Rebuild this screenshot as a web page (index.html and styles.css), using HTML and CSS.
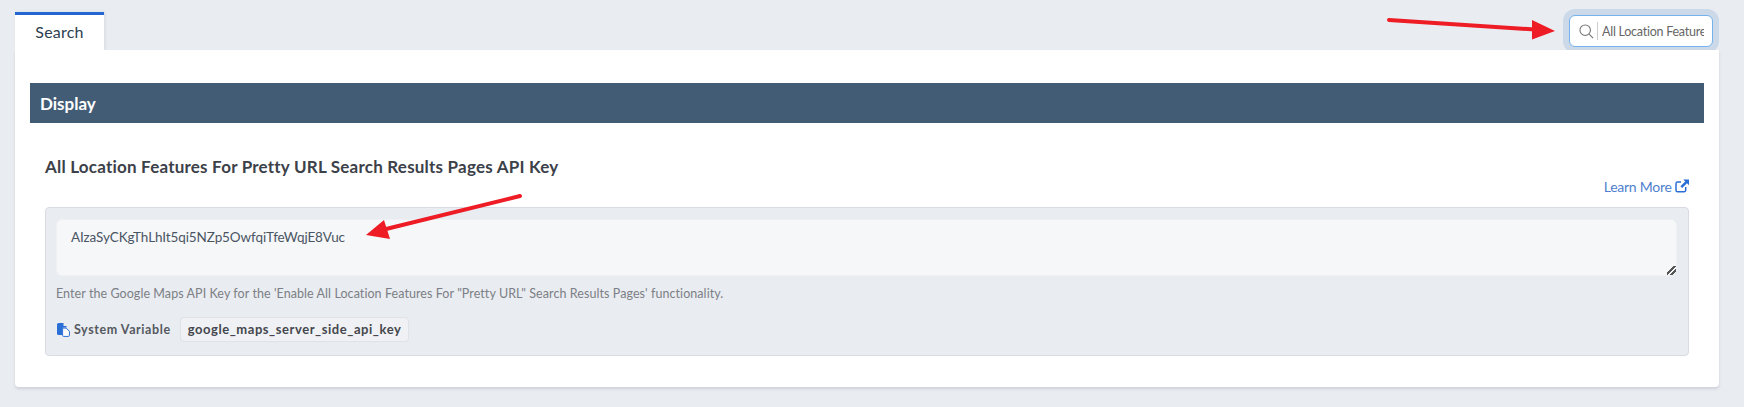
FILE: index.html
```html
<!DOCTYPE html>
<html lang="en">
<head>
<meta charset="utf-8">
<title>Search settings</title>
<link rel="stylesheet" href="styles.css">
</head>
<body>
<div class="page">
  <header class="top">
    <div class="tab">Search</div>
    <label class="search">
      <svg class="search-icon" viewBox="0 0 16 16" width="15" height="15"><circle cx="6.6" cy="6.6" r="5.6"/><path d="M10.8 10.8L15 15"/></svg>
      <input class="search-input" type="text" value="All Location Features">
    </label>
  </header>
  <main class="card">
    <h2 class="banner">Display</h2>
    <section class="setting">
      <h3 class="setting-title">All Location Features For Pretty URL Search Results Pages API Key</h3>
      <div class="learn-row">
        <a class="learn" href="#">Learn More
          <svg viewBox="0 0 14 14" width="14" height="14"><path class="ext-box" d="M10.7 8v3.2a1.6 1.6 0 0 1-1.6 1.6H2.6A1.6 1.6 0 0 1 1 11.200V4.700a1.600 1.600 0 0 1 1.600-1.600H6"/><path class="ext-arrow" d="M8.200.500H14v5.800l-2-2-4.800 4.800-1.800-1.800L10.200 2.500z"/></svg>
        </a>
      </div>
      <div class="well">
        <textarea class="key" spellcheck="false">AIzaSyCKgThLhIt5qi5NZp5OwfqiTfeWqjE8Vuc</textarea>
        <p class="help">Enter the Google Maps API Key for the 'Enable All Location Features For "Pretty URL" Search Results Pages' functionality.</p>
        <div class="sysvar">
          <svg viewBox="0 0 13 14" width="13" height="14"><path class="doc-back" d="M0 1.500A1.500 1.500 0 0 1 1.500 0H6.500v3h3v1.500H6.500A1.500 1.500 0 0 0 5 6v6H1.500A1.500 1.500 0 0 1 0 10.500z"/><path class="doc-front" d="M5.600 5.100H9.200L12.400 8.300V12.400A1 1 0 0 1 11.400 13.400H6.600A1 1 0 0 1 5.600 12.400z"/></svg>
          <span class="sysvar-label">System Variable</span>
          <code class="sysvar-code">google_maps_server_side_api_key</code>
        </div>
      </div>
    </section>
  </main>
</div>
<svg class="arrows" viewBox="0 0 1744 407" width="1744" height="407" aria-hidden="true">
  <path class="arrow-line" d="M1389 20L1535 29.500"/>
  <path class="arrow-head" d="M1532 20L1555 31L1532 39.500z"/>
  <path class="arrow-line" d="M520 196L382 230"/>
  <path class="arrow-head" d="M384 220L366 235L390 239z"/>
</svg>
</body>
</html>
```
FILE: styles.css
```css
* { box-sizing: border-box; }
html, body { margin: 0; height: 100%; }
body {
  background: #e9ecf1;
  color: #3c4149;
  font-family: "Lato", "Open Sans", sans-serif;
  overflow: hidden;
  position: relative;
}
.page { padding: 12px 25px 0 15px; }
.top {
  display: flex;
  justify-content: space-between;
  align-items: flex-end;
  height: 38px;
}
.tab {
  width: 89px;
  height: 38px;
  background: #fff;
  border-top: 3px solid #2366d1;
  color: #2c3e50;
  font-size: 16px;
  line-height: 34px;
  text-align: center;
  letter-spacing: 0.2px;
  box-shadow: 1px 0 3px rgba(60, 70, 90, .1);
}
.search {
  display: flex;
  align-items: center;
  width: 144px;
  height: 32px;
  margin: 0 6px 3px 0;
  padding-left: 9px;
  background: #fff;
  border: 1px solid #74b3ee;
  border-radius: 6px;
  box-shadow: 0 0 0 6px rgba(100, 150, 200, .22);
}
.search-icon { flex: none; fill: none; stroke: #777; stroke-width: 1.2; }
.search-input {
  flex: 1;
  min-width: 0;
  height: 18px;
  margin: 0 8px 0 3px;
  padding: 0 0 0 4px;
  border: 0;
  border-left: 1px solid #ccc;
  outline: 0;
  background: transparent;
  color: #666;
  font: 12.500px "Lato", sans-serif;
  letter-spacing: -.25px;
}
.card {
  position: relative;
  height: 337px;
  padding: 33px 15px 0;
  background: #fff;
  border-radius: 0 0 4px 4px;
  box-shadow: 0 2px 3px rgba(60, 70, 90, .16);
}
.banner {
  margin: 0;
  height: 40px;
  padding-left: 10px;
  background: #435c76;
  color: #fff;
  font-size: 17px;
  font-weight: 700;
  line-height: 41px;
  letter-spacing: 0;
}
.setting { padding: 0 15px; }
.setting-title {
  margin: 0;
  padding-top: 32px;
  color: #3c4149;
  font-size: 17px;
  font-weight: 700;
  line-height: 23px;
  letter-spacing: .21px;
}
.learn-row {
  display: flex;
  justify-content: flex-end;
  height: 29px;
}
.learn {
  color: #4f7fd0;
  font-size: 14px;
  line-height: 18px;
  letter-spacing: -.25px;
  text-decoration: none;
}
.learn svg { vertical-align: -1px; }
.ext-box { fill: none; stroke: #2a6fd6; stroke-width: 1.500; }
.ext-arrow { fill: #2a6fd6; }
.well {
  height: 149px;
  padding: 11px 11px 0 10px;
  background: #e9ecf1;
  border: 1px solid #d8dce2;
  border-radius: 4px;
}
.key {
  display: block;
  width: 100%;
  height: 57px;
  padding: 7px 14px;
  background: #f6f7f9;
  border: 1px solid #eef0f3;
  border-radius: 6px;
  outline: 0;
  color: #4a5563;
  font: 13.500px/20px "Lato", sans-serif;
  letter-spacing: -.1px;
}
.key::-webkit-resizer {
  background: linear-gradient(135deg, transparent 36%, #555 36%, #555 52%, transparent 52%, transparent 66%, #555 66%, #555 82%, transparent 82%) right bottom / 9px 9px no-repeat;
}
.help {
  margin: 9px 0 0;
  color: #7c7f85;
  font-size: 12.500px;
  line-height: 18px;
  letter-spacing: .07px;
}
.sysvar {
  display: flex;
  align-items: center;
  margin: 14px 0 0 1px;
}
.sysvar svg { flex: none; }
.doc-back { fill: #2a6fd6; }
.doc-front { fill: #fff; stroke: #2a6fd6; stroke-width: 1; }
.sysvar-label {
  margin-left: 4px;
  color: #55595f;
  font-size: 12.500px;
  font-weight: 700;
  letter-spacing: .58px;
}
.sysvar-code {
  margin-left: 9px;
  padding: 0 7px;
  height: 25px;
  background: #f0f1f4;
  border: 1px solid #dfe2e6;
  border-radius: 4px;
  color: #44474d;
  font: 700 13px/22px "Lato", sans-serif;
  letter-spacing: .56px;
}
.arrows { position: absolute; left: 0; top: 0; pointer-events: none; }
.arrow-line { fill: none; stroke: #ee1c25; stroke-width: 4; stroke-linecap: round; }
.arrow-head { fill: #ee1c25; }
```
